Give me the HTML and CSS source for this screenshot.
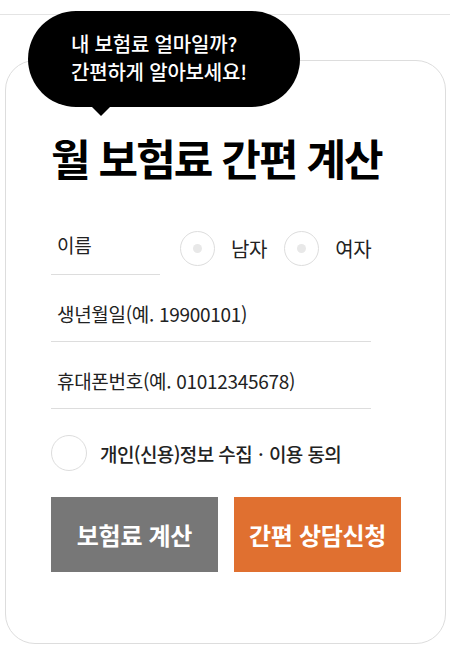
FILE: index.html
```html
<!DOCTYPE html>
<html lang="ko">
<head>
  <meta charset="UTF-8" />
  <meta name="viewport" content="width=device-width, initial-scale=1.0" />
  <title>월 보험료 간편 계산</title>
  <link rel="stylesheet" href="styles.css">
</head>
<body>
  <div class="topbar"></div>

  <div class="wrap">
    <div class="bubble">내 보험료 얼마일까?<br>간편하게 알아보세요!</div>

    <form class="card">
      <h1 class="title">월 보험료 간편 계산</h1>

      <div class="row">
        <input class="field field-name" type="text" placeholder="이름">
        <label class="radio"><input type="radio" name="gender"><span class="dot"></span>남자</label>
        <label class="radio"><input type="radio" name="gender"><span class="dot"></span>여자</label>
      </div>
      <input class="field" type="text" placeholder="생년월일(예. 19900101)">
      <input class="field" type="text" placeholder="휴대폰번호(예. 01012345678)">

      <label class="agree"><input type="checkbox"><span class="check"></span>개인(신용)정보 수집ㆍ이용 동의</label>

      <div class="buttons">
        <button type="button" class="btn btn-gray">보험료 계산</button>
        <button type="button" class="btn btn-orange">간편 상담신청</button>
      </div>
    </form>
  </div>
</body>
</html>
```

FILE: styles.css
```css
* {
  box-sizing: border-box;
}
body {
  margin: 0;
  padding: 0;
  font-family: "Noto Sans CJK KR", "Noto Sans", sans-serif;
  background: #fff;
  color: #222;
}

.topbar {
  height: 15px;
  border-bottom: 1px solid #e4e4e4;
}

.wrap {
  position: relative;
  padding: 45px 4px 0 5px;
}

.bubble {
  position: absolute;
  top: -4px;
  left: 28px;
  width: 272px;
  height: 96px;
  padding: 19px 0 0 43px;
  background: #000;
  color: #fff;
  border-radius: 48px;
  font-size: 20px;
  font-weight: 500;
  line-height: 28px;
  letter-spacing: -0.2px;
}

.bubble::after {
  content: "";
  position: absolute;
  left: 64px;
  bottom: -9px;
  border-left: 9px solid transparent;
  border-right: 9px solid transparent;
  border-top: 9px solid #000;
}

.card {
  height: 584px;
  border: 1px solid #ddd;
  border-radius: 30px;
  padding: 71px 0 0 45px;
}

.title {
  margin: 0 0 26px;
  font-size: 43px;
  font-weight: 700;
  line-height: 50px;
  letter-spacing: -2px;
  color: #000;
}

.row {
  display: flex;
  align-items: flex-end;
}

.field {
  display: block;
  width: 320px;
  height: 67px;
  padding: 26px 0 16px 6px;
  border: none;
  border-bottom: 1px solid #ddd;
  font-family: inherit;
  font-size: 19px;
  line-height: 24px;
  letter-spacing: -0.3px;
  color: #222;
  outline: none;
  background: transparent;
}

.field::placeholder {
  color: #222;
  opacity: 1;
}

.field-name {
  width: 109px;
  margin-right: 20px;
  padding-top: 24px;
  padding-bottom: 18px;
}

.radio {
  display: flex;
  align-items: center;
  gap: 16px;
  margin-right: 17px;
  margin-bottom: 9px;
  font-size: 20px;
  letter-spacing: -0.3px;
  cursor: pointer;
}

.radio input,
.agree input {
  display: none;
}

.dot {
  width: 35px;
  height: 35px;
  border: 1px solid #ddd;
  border-radius: 50%;
  display: flex;
  align-items: center;
  justify-content: center;
}

.dot::before {
  content: "";
  width: 9px;
  height: 9px;
  border-radius: 50%;
  background: #e8e8e8;
}

.agree {
  display: flex;
  align-items: center;
  gap: 13px;
  margin-top: 26px;
  font-size: 19px;
  font-weight: 500;
  letter-spacing: -0.6px;
  cursor: pointer;
}

.check {
  width: 36px;
  height: 36px;
  border: 1px solid #ddd;
  border-radius: 50%;
}

.buttons {
  display: flex;
  gap: 16px;
  margin-top: 26px;
}

.btn {
  width: 167px;
  height: 75px;
  border: none;
  color: #fff;
  font-family: inherit;
  font-size: 24px;
  font-weight: 700;
  letter-spacing: -0.3px;
  cursor: pointer;
}

.btn-gray {
  background: #777;
}

.btn-orange {
  background: #e07030;
}
```
